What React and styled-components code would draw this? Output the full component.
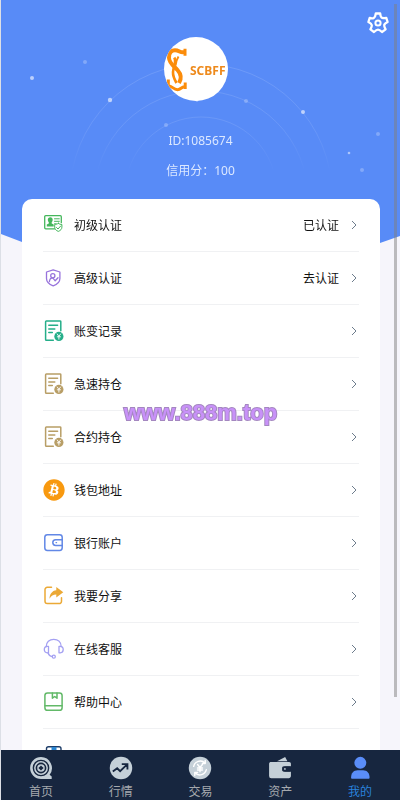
import React from 'react';
import styled, { createGlobalStyle, css } from 'styled-components';
import { FaBitcoin } from 'react-icons/fa';

const GlobalStyle = createGlobalStyle`
  * {
    box-sizing: border-box;
  }
  body {
    margin: 0;
    background: #f6f5fb;
    font-family: 'Noto Sans', 'Noto Sans CJK SC', sans-serif;
    font-size: 12px;
    line-height: 18px;
    color: #111;
  }
`;

const Icon = ({ children, size = 22, ...rest }) => (
  <svg
    width={size}
    height={size}
    viewBox='0 0 22 22'
    fill='none'
    stroke='currentColor'
    strokeWidth='1.4'
    strokeLinecap='round'
    strokeLinejoin='round'
    aria-hidden='true'
    {...rest}
  >
    {children}
  </svg>
);

const GearIcon = () => (
  <Icon strokeWidth='2.3'>
    <path d='M8.8 1.500h4.400Q13.600 5.600 15.200 5.900T19.300 5.900L20.600 10Q17.300 11.600 17.200 13.100T18.600 17.400L15 20Q12.500 17.700 11 17.700T7 20L3.400 17.400Q5 14.600 4.800 13.100T1.400 10L2.700 5.900Q5.200 6.800 6.800 5.900T8.800 1.500z' />
    <circle cx='11' cy='11' r='2.600' strokeWidth='2' />
  </Icon>
);

const IdCardIcon = () => (
  <Icon strokeWidth='1.3'>
    <path d='M12 14.8H2.7a1 1 0 0 1-1-1V2.7a1 1 0 0 1 1-1h14.6a1 1 0 0 1 1 1v6' />
    <path d='M11.5 4.8h4.8M11.5 7.3h4.8M11.5 9.8h1.8' strokeWidth='1' />
    <path
      d='M7.3 3.2c1.5 0 2.4 1.1 2.4 2.6 0 1-.4 1.9-1 2.5v1.2l2 1.1v1.9H3.8v-1.900l2-1.100V8.300c-.6-.6-1-1.500-1-2.500 0-1.500 1-2.600 2.500-2.600z'
      fill='currentColor'
      stroke='none'
    />
    <path
      d='M15.300 9.300c1.200.9 2.300 1.200 3.600 1.200v2.600c0 2-1.300 3.400-3.600 4.300-2.300-.9-3.600-2.300-3.600-4.300v-2.600c1.300 0 2.400-.3 3.600-1.200z'
      fill='#fff'
      strokeWidth='1'
    />
    <path d='M13.500 13.500l1.500 1.500 2.700-3' strokeWidth='1' />
  </Icon>
);

const ShieldIcon = () => (
  <Icon strokeWidth='1.300'>
    <path d='M10.200 2.800l6.700 2.200v6.500c0 3.200-2.700 5.800-6.700 7.300-4-1.500-6.700-4.100-6.700-7.300V5z' />
    <circle cx='9.800' cy='8.700' r='2.100' />
    <path d='M6.400 14.500c.2-2.100 1.500-3.700 3.400-3.700l2.400 3 2.800-3' />
  </Icon>
);

const RecordIcon = () => (
  <Icon strokeWidth='1.500'>
    <path d='M10.300 20.200H3.400a.8.8 0 0 1-.8-.8V1.700a.8.8 0 0 1 .8-.8h13.600a.8.8 0 0 1 .8.8v9' />
    <path d='M5.800 5.300h8.800M5.800 9h6M5.800 12.600h3.500' />
    <circle cx='15.900' cy='16.400' r='4.600' fill='currentColor' stroke='none' />
    <path d='M14.200 14l1.700 2.300 1.700-2.300M15.900 16.300v2.900M14.300 16.800h3.200' stroke='#fff' strokeWidth='.9' />
  </Icon>
);

const BankIcon = () => (
  <Icon strokeWidth='1.500'>
    <rect x='1.800' y='2.700' width='17.400' height='15.700' rx='2.600' />
    <path d='M19.200 7.700h-6.500a2.900 2.900 0 0 0 0 5.800h6.500' />
    <path d='M13 10.600h.6' strokeWidth='1.200' />
  </Icon>
);

const ShareIcon = () => (
  <Icon strokeWidth='1.500'>
    <path d='M8.500 2.300H4.300A2.300 2.300 0 0 0 2 4.600v11.700a2.300 2.300 0 0 0 2.300 2.300h11.900a2.300 2.300 0 0 0 2.300-2.300v-3.600' />
    <path
      d='M13.300 2l7 5.300-7 5.300V9.600c-3.200 0-5 1.300-6.800 4.200.2-4.800 2.600-8 6.800-8.500z'
      fill='currentColor'
      stroke='none'
    />
  </Icon>
);

const HeadsetIcon = () => (
  <Icon strokeWidth='1.300'>
    <path d='M3.200 8.700C3.200 4 6.400 1.300 10.700 1.300S18.200 4 18.200 8.700' />
    <path d='M5.500 8.300v6.500H4.200c-1.800 0-2.900-1.300-2.900-3.200s1.100-3.300 2.900-3.300zM16 8.300v6.500h1.300c1.800 0 2.900-1.300 2.900-3.200s-1.100-3.300-2.900-3.300z' />
    <path d='M5 14.800c.7 2.300 2 3.500 4.200 3.800' />
    <circle cx='10.800' cy='18.700' r='1.500' />
  </Icon>
);

const BookIcon = () => (
  <Icon strokeWidth='1.500'>
    <rect x='1.900' y='1.900' width='17.200' height='17.400' rx='2.600' />
    <path d='M2 14.800h17M9.400 2v5.200l2.300-1.700L14 7.200V2' />
  </Icon>
);

const AboutIcon = () => (
  <Icon>
    <rect x='3.500' y='2.700' width='14.500' height='17' rx='2' />
    <path d='M8.500 3h5v7l-2.500-2-2.500 2z' fill='#2a85d0' stroke='none' />
  </Icon>
);

const ChevronIcon = () => (
  <svg width='6' height='10' viewBox='0 0 6 10' fill='none' stroke='#6d7c8c' aria-hidden='true'>
    <path d='M1 1l4 4-4 4' />
  </svg>
);

const HomeTabIcon = () => (
  <Icon size={24} stroke='none'>
    <path d='M11 1a10 10 0 1 0 0 20h9.800v-2.200l-1.900-1.700A10 10 0 0 0 11 1z' fill='currentColor' />
    <circle cx='11' cy='11' r='7' stroke='#17263f' strokeWidth='1.300' />
    <circle cx='11' cy='11' r='4.200' stroke='#17263f' strokeWidth='1.500' />
    <path d='M11 8.600l2.400 2.400-2.400 2.400L8.600 11z' fill='#17263f' />
  </Icon>
);

const MarketTabIcon = () => (
  <Icon size={24} stroke='#17263f' strokeWidth='1.700' strokeLinecap='butt' strokeLinejoin='miter'>
    <circle cx='11' cy='11' r='10.300' fill='currentColor' stroke='none' />
    <path d='M3.500 14.300l4-3 2.700 2.700 6.400-6.300M11.700 7.400h5.200v5' />
  </Icon>
);

const TradeTabIcon = () => (
  <Icon size={24} stroke='#fff' strokeWidth='1.300'>
    <circle cx='11' cy='11' r='10.300' fill='currentColor' stroke='none' />
    <path d='M5.200 9.500A6.200 6.200 0 0 1 15.500 6.400M15.800 4.200v2.600h-2.600M16.800 12.500A6.200 6.200 0 0 1 6.500 15.600M6.200 17.800v-2.600h2.600' />
    <path d='M8.800 7.800l2.200 2.700 2.200-2.700M11 10.500v4M8.700 11h4.600M8.700 12.900h4.600' />
  </Icon>
);

const AssetsTabIcon = () => (
  <Icon size={24} stroke='none'>
    <path d='M8.300 4.800L15.700 1l2.100 3.800z' fill='currentColor' />
    <path
      d='M2.800 5.500h16.600c.9 0 1.600.7 1.600 1.600v2.300h-5.300a2.500 2.500 0 0 0 0 5H21v4c0 1.100-.9 2-2 2H3a2 2 0 0 1-2-2V7c0-.9.8-1.500 1.800-1.500z'
      fill='currentColor'
    />
    <rect x='13' y='9.700' width='8' height='4.400' rx='1' fill='#17263f' />
    <circle cx='15.500' cy='11.900' r='.8' fill='currentColor' />
  </Icon>
);

const MineTabIcon = () => (
  <Icon size={24} stroke='none' fill='#5a8df8'>
    <circle cx='11.300' cy='6.300' r='5.500' />
    <path d='M2.800 20c0-4.500 2.500-7 6-7h5c3.500 0 6 2.500 6 7 0 .5-.4.8-.8.8H3.600c-.4 0-.8-.3-.8-.8z' />
  </Icon>
);

const BrandLogo = () => (
  <svg width='64' height='64' viewBox='0 0 64 64' role='img' aria-label='SCBFF'>
    <g fill='none' stroke='#fb8c0a' strokeLinejoin='round'>
      <path d='M20.500 14.800c-3.500 2-5-1.600-9.500-1.600-4 0-6.200 3.300-6 7.800.3 5.500 5 8 8.500 12 3.500 4 4 9 1.500 13' strokeWidth='4' />
      <path d='M21 11.800v7M21.200 45.500v6.500M4.300 42.500v6.500c3.500-.5 5 3.700 9.200 3.700 3.500 0 4.500-3.500 8-3.200' strokeWidth='3' />
      <path d='M10.300 20.500c2.500 4.500-1 9.500-1.300 14.500-.2 4 1.500 7.500 3.500 11' strokeWidth='2.600' />
      <path d='M14.500 19.500c-2 3-2.500 6-3 9' strokeWidth='2' />
    </g>
    <BrandText x='26' y='38'>SCBFF</BrandText>
  </svg>
);

const dots = [
  [32, 78, 2, 0.6],
  [85, 62, 2, 0.25],
  [110, 100, 2.2, 0.6],
  [246, 101, 2, 0.25],
  [303, 112, 2, 0.6],
  [166, 125, 2, 0.25],
  [197, 100, 1.5, 0.6],
  [378, 134, 2, 0.25],
  [349, 153, 1.3, 0.5],
  [362, 170, 2, 0.25]
];

const Sky = () => (
  <SkyDrawing viewBox='1 0 399 300' preserveAspectRatio='xMidYMin slice' aria-hidden='true'>
    <defs>
      <linearGradient id='ring' gradientUnits='userSpaceOnUse' x1='0' y1='60' x2='0' y2='172'>
        <stop offset='0' stopColor='#fff' stopOpacity='.13' />
        <stop offset='.6' stopColor='#fff' stopOpacity='.1' />
        <stop offset='1' stopColor='#fff' stopOpacity='0' />
      </linearGradient>
    </defs>
    <path d='M1 0h399v236l-20 7-100 37H122L22 242l-21-8z' fill='#588bf7' />
    <g fill='none' stroke='url(#ring)'>
      <circle cx='201' cy='195' r='131' />
      <circle cx='201' cy='198' r='107' />
      <circle cx='201' cy='193' r='76' />
    </g>
    {dots.map(([x, y, r, opacity]) => (
      <circle key={`${x}-${y}`} cx={x} cy={y} r={r} fill='#fff' opacity={opacity} />
    ))}
  </SkyDrawing>
);

const menu = [
  { label: '初级认证', value: '已认证', color: '#45b75c', icon: <IdCardIcon /> },
  { label: '高级认证', value: '去认证', color: '#9873dc', icon: <ShieldIcon /> },
  { label: '账变记录', color: '#25ae89', icon: <RecordIcon /> },
  { label: '急速持仓', color: '#b89e66', icon: <RecordIcon /> },
  { label: '合约持仓', color: '#b89e66', icon: <RecordIcon /> },
  { label: '钱包地址', color: '#f8990f', icon: <FaBitcoin size={22} /> },
  { label: '银行账户', color: '#6288e6', icon: <BankIcon /> },
  { label: '我要分享', color: '#eba936', icon: <ShareIcon /> },
  { label: '在线客服', color: '#a4a0f2', icon: <HeadsetIcon /> },
  { label: '帮助中心', color: '#62b968', icon: <BookIcon /> }
];

const tabs = [
  { label: '首页', href: '#home', icon: <HomeTabIcon /> },
  { label: '行情', href: '#market', icon: <MarketTabIcon /> },
  { label: '交易', href: '#trade', icon: <TradeTabIcon /> },
  { label: '资产', href: '#assets', icon: <AssetsTabIcon /> },
  { label: '我的', href: '#mine', icon: <MineTabIcon />, active: true }
];

const App = () => (
  <>
    <GlobalStyle />
    <Page>
      <Content>
        <Sky />
        <Header>
          <SettingsButton type='button' aria-label='设置'>
            <GearIcon />
          </SettingsButton>
          <Avatar>
            <BrandLogo />
          </Avatar>
          <UserLine>ID:1085674</UserLine>
          <UserLine>信用分：100</UserLine>
        </Header>
        <Card>
          {menu.map(({ label, value, color, icon }) => (
            <MenuItem key={label}>
              <MenuButton type='button'>
                <MenuIcon color={color}>{icon}</MenuIcon>
                <MenuLabel>{label}</MenuLabel>
                {value && <MenuValue>{value}</MenuValue>}
                <ChevronIcon />
              </MenuButton>
            </MenuItem>
          ))}
          <MenuItem>
            <MenuButton type='button' aria-label='关于'>
              <MenuIcon color='#1d3d68'>
                <AboutIcon />
              </MenuIcon>
            </MenuButton>
          </MenuItem>
        </Card>
      </Content>
      <TabBar>
        {tabs.map(({ label, href, icon, active }) => (
          <Tab key={label} href={href} $active={active}>
            {icon}
            {label}
          </Tab>
        ))}
      </TabBar>
      <ScrollThumb />
      <Watermark>www.888m.top</Watermark>
    </Page>
  </>
);

const Page = styled.div`
  position: relative;
  display: flex;
  flex-direction: column;
  height: 100vh;
  border-left: 1px solid #dcdfe6;
`;

const Content = styled.main`
  position: relative;
  flex: 1;
  min-height: 0;
  overflow-y: auto;
  scrollbar-width: none;
`;

const SkyDrawing = styled.svg`
  position: absolute;
  top: 0;
  left: 0;
  width: 100%;
  z-index: -1;
`;

const Header = styled.header`
  display: flex;
  flex-direction: column;
  align-items: center;
  gap: 12px;
  padding: 37px 0 19px;
`;

const SettingsButton = styled.button`
  position: absolute;
  top: 12px;
  right: 11px;
  display: flex;
  padding: 0;
  border: 0;
  background: none;
  color: #fff;
  cursor: pointer;
`;

const Avatar = styled.div`
  display: flex;
  width: 64px;
  height: 64px;
  margin: 0 10px 19px 0;
  border-radius: 50%;
  background: #fff;
  overflow: hidden;
`;

const BrandText = styled.text`
  font-family: 'Noto Sans', sans-serif;
  font-size: 12px;
  font-weight: 700;
  fill: #ee8a1c;
`;

const UserLine = styled.div`
  color: #dce8ff;
`;

const Card = styled.ul`
  margin: 0 20px 0 21px;
  padding: 0 21px;
  border-radius: 10px;
  background: #fff;
  list-style: none;
`;

const MenuItem = styled.li`
  border-bottom: 1px solid #f0f1f3;
`;

const MenuButton = styled.button`
  display: flex;
  align-items: center;
  gap: 12px;
  width: 100%;
  height: 52px;
  padding: 0 2px 0 0;
  border: 0;
  background: none;
  color: inherit;
  font: inherit;
  text-align: left;
  cursor: pointer;
`;

const MenuIcon = styled.span`
  display: flex;
  margin-right: -3px;
  color: ${props => props.color};
`;

const MenuValue = styled.span`
  padding-top: 2px;
`;

const MenuLabel = styled(MenuValue)`
  flex: 1;
`;

const TabBar = styled.nav`
  display: flex;
  height: 50px;
  background: #17263f;
`;

const Tab = styled.a`
  flex: 1;
  display: flex;
  flex-direction: column;
  align-items: center;
  padding-top: 6px;
  color: #a5a9ae;
  text-decoration: none;
  svg {
    flex-shrink: 0;
    margin-bottom: 3px;
    color: #c5d0d8;
  }
  ${props =>
    props.$active &&
    css`
      color: #2a82dc;
    `}
`;

const ScrollThumb = styled.div`
  position: absolute;
  top: 4px;
  right: 3px;
  bottom: 103px;
  width: 3px;
  background: rgba(128, 128, 128, 0.5);
`;

const Watermark = styled.div`
  position: absolute;
  top: 401px;
  left: 0;
  right: 0;
  color: #c891f8;
  font-family: 'Liberation Sans', sans-serif;
  font-size: 22px;
  font-weight: 700;
  line-height: 24px;
  text-align: center;
  -webkit-text-stroke: 2px #a487c0;
  paint-order: stroke fill;
  pointer-events: none;
`;

export default App;
